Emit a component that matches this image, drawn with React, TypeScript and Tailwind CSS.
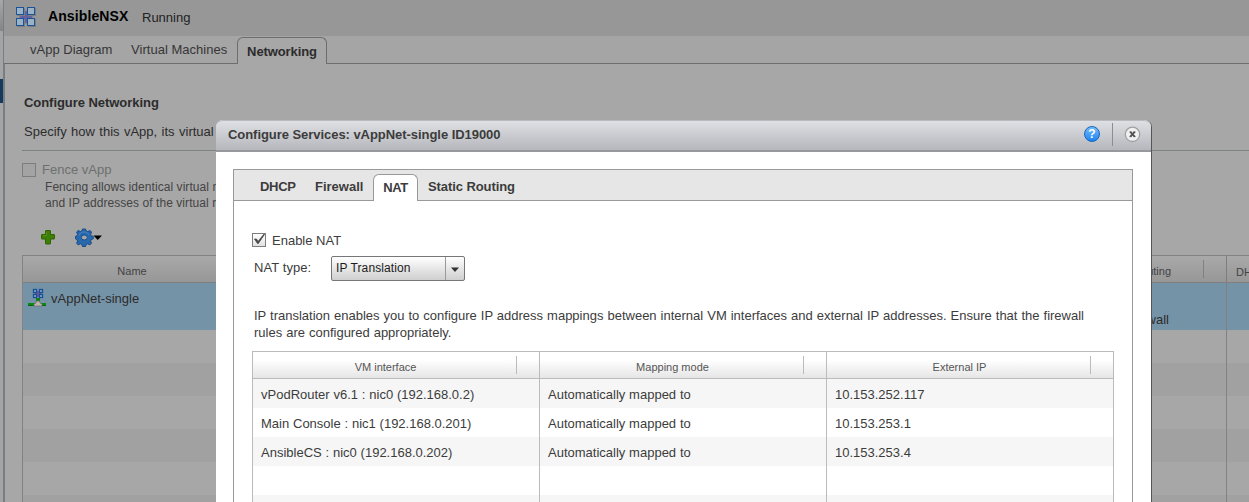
import React from "react";

function VAppIcon() {
  return (
    <svg width="20" height="20" viewBox="0 0 20 20" className="block">
      <path d="M10 3l1.500 2.500L15 4.500l-1 3.500 3 2-3 2 1 3.500-3.500-1L10 17l-1.500-2.500-3.500 1 1-3.500-3-2L6 8 5 4.500l3.500 1z" fill="#5c57a0" opacity=".85" />
      {[[1, 1], [12, 1], [1, 12], [12, 12]].map(([x, y]) => (
        <g key={x + "-" + y}>
          <rect x={x + 0.5} y={y + 0.5} width="7" height="7" fill="none" stroke="#7d7d7d" />
          <rect x={x - 0.5} y={y - 0.5} width="7" height="7" fill="#9bb2c4" stroke="#17549a" />
        </g>
      ))}
    </svg>
  );
}

function PlusIcon() {
  return (
    <svg width="16" height="16" viewBox="0 0 16 16" className="block">
      <path d="M6 1.500h4a.5.5 0 0 1 .5.5v3.500H14a.5.5 0 0 1 .5.5v3.500a.5.5 0 0 1-.5.5h-3.500V14.500a.5.5 0 0 1-.5.5H6a.5.5 0 0 1-.5-.5V10H2a.5.5 0 0 1-.5-.5V6a.5.5 0 0 1 .5-.5h3.500V2a.5.5 0 0 1 .5-.5z" fill="#3d7f08" stroke="#2f6400" />
      <path d="M6.500 3v3.500H3" fill="none" stroke="#559020" />
    </svg>
  );
}

function GearIcon() {
  return (
    <svg width="27" height="19" viewBox="0 0 27 19" className="block">
      <path d="M7.500 1h3l.7 2 1.500.6L15 2.500 16.500 4l-.9 2.400.6 1.300 2.100.7v2.400l-2.100.8-.6 1.400.9 2.300-1.700 1.500-2.200-1-1.400.6-.7 2.100h-3l-.8-2.100-1.300-.6-2.200 1L1.600 15.300l1-2.300-.6-1.400-1.500-.8V8.400L2 7.700l.6-1.300-1-2.400 1.600-1.500 2.200 1.100L6.800 3z" fill="#2868ac" stroke="#174a88" />
      <path d="M4 7.500C5 4.500 7 4 9 4s4 .8 5 3" fill="none" stroke="#4b84c0" />
      <ellipse cx="9.300" cy="9.500" rx="3" ry="2.500" fill="#a6a6a6" stroke="#174f90" />
      <path d="M18.500 7.500h8.500L22.700 12z" fill="#000" />
    </svg>
  );
}

function NetIcon() {
  return (
    <svg width="18" height="19" viewBox="0 0 18 19" className="block">
      <path d="M8 10h4v4H8z" fill="#128012" />
      <path d="M7 5h6v2H7zM9 3h2v6H9z" fill="#6f579d" />
      {[[5.5, 1.5], [11.5, 1.5], [5.5, 6.5], [11.5, 6.5]].map(([x, y]) => (
        <rect key={x + "-" + y} x={x} y={y} width="3" height="3" fill="#8eb4cf" stroke="#164f96" strokeWidth="1.300" />
      ))}
      <path d="M0 15h18v3H0z" fill="#0b8a12" />
      <path d="M0 17h18v1H0z" fill="#08660c" />
      <path d="M8.500 13h3l.5 2 2 1v2H6v-2l2-1z" fill="#b9b5b0" stroke="#6d6a68" strokeWidth=".7" />
    </svg>
  );
}

function HelpIcon() {
  return (
    <div className="flex h-4 w-4 items-center justify-center rounded-full border border-[#1767bd] bg-linear-to-b from-[#74bbf7] to-[#1683f2] text-[12px] leading-none font-bold text-white">
      ?
    </div>
  );
}

function CloseIcon() {
  return (
    <svg width="18" height="18" viewBox="0 0 18 18" className="block">
      <circle cx="8.500" cy="9.300" r="7.200" fill="#f0f0f0" stroke="#a0a0a0" strokeWidth="1.300" />
      <path d="M6.300 6.900l4.400 4.800M10.700 6.900l-4.400 4.800" stroke="#505050" strokeWidth="1.800" />
      <path d="M5.500 7h2M9.500 7h2M5.500 11.600h2M9.500 11.600h2" stroke="#505050" />
    </svg>
  );
}

const mappings = [
  ["vPodRouter v6.1 : nic0 (192.168.0.2)", "Automatically mapped to", "10.153.252.117"],
  ["Main Console : nic1 (192.168.0.201)", "Automatically mapped to", "10.153.253.1"],
  ["AnsibleCS : nic0 (192.168.0.202)", "Automatically mapped to", "10.153.253.4"],
  ["", "", ""],
  ["", "", ""],
];

function Background() {
  return (
    <div className="flex h-[502px] w-[1249px]">
      <div className="flex w-[3px] shrink-0 flex-col bg-[#a4a4a4]">
        <div className="h-[31px] bg-linear-to-b from-[#a7a7a7] to-[#858585]" />
        <div className="h-12" />
        <div className="h-6 bg-[#19395b]" />
      </div>
      <div className="w-px shrink-0 bg-[#71818b]" />
      <div className="flex min-w-0 grow flex-col">
        <header className="flex h-9 shrink-0 items-start bg-[#979797] pl-[12px]">
          <div className="mt-[7px] w-[32px]"><VAppIcon /></div>
          <h1 className="mt-[7px] w-[94px] text-[14px] leading-[18px] font-bold tracking-[0.1px] whitespace-nowrap text-black">AnsibleNSX</h1>
          <span className="mt-[9px] text-[13px] leading-[18px] text-[#222]">Running</span>
        </header>
        <nav className="flex h-7 shrink-0 border-b border-[#6d6d6d] bg-[#a5a5a5] pl-[26px] text-[13px] leading-[18px] whitespace-nowrap text-[#363636]">
          <span className="mt-[5px] w-[101px]">vApp Diagram</span>
          <span className="mt-[5px] w-[106px] tracking-[0.03px]">Virtual Machines</span>
          <span className="mt-px h-[27px] w-[90px] rounded-t-[6px] border border-b-0 border-[#6d6d6d] bg-[#a7a7a7] pt-[5px] text-center font-bold tracking-[-0.1px] text-[#2c2c2c]">Networking</span>
        </nav>
        <main className="flex grow flex-col border-l border-[#7c7c7c] bg-[#a7a7a7] pl-[17px]">
          <h2 className="mt-[30px] pl-[2px] text-[13px] leading-[18px] font-bold tracking-[-0.05px] text-[#2c2c2c]">Configure Networking</h2>
          <p className="mt-[11px] pl-[2px] text-[13px] leading-[18px] [word-spacing:0.8px] text-[#2c2c2c]">Specify how this vApp, its virtual</p>
          <div className="mt-[9px] h-px shrink-0 bg-[#7b8282]" />
          <div className="mt-[10px] flex h-[18px] items-center gap-[6px] text-[13px] text-[#6c706e]">
            <span className="h-[14px] w-[14px] border border-[#7d7d7d] bg-[#a3a3a3]" />
            <span>Fence vApp</span>
          </div>
          <p className="w-[171px] overflow-hidden pl-[23px] text-[12px] leading-4 tracking-[0.06px] whitespace-nowrap text-[#444] w-[194px]">Fencing allows identical virtual m<br />and IP addresses of the virtual r</p>
          <div className="mt-[17px] flex h-[27px] items-start pl-[18px]">
            <div className="mt-px w-[35px]"><PlusIcon /></div>
            <GearIcon />
          </div>
          <section className="flex grow flex-col border-t border-l border-[#828282]">
            <div className="flex h-[27px] shrink-0 border-b border-[#808080] bg-linear-to-b from-[#a9a9a9] to-[#979797] text-[11px] text-[#424242]">
              <div className="flex w-[218px] shrink-0 items-center justify-center pt-[5px]">Name</div>
              <div className="flex w-[986px] shrink-0 items-center justify-end border-r border-[#7d7d7d] pt-[5px]">
                <span className="mr-[32px]">Routing</span>
                <span className="mr-[22px] -mt-[5px] h-[18px] w-px bg-[#808080]" />
              </div>
              <div className="w-0 grow overflow-hidden pt-[8px] pl-[9px] leading-4">DHCP</div>
            </div>
            <div className="flex h-[47px] shrink-0 bg-[#7593a7] text-[13px] leading-[18px] text-[#2c2c2c]">
              <div className="mt-[5px] w-[24px] shrink-0 pl-[5px]"><NetIcon /></div>
              <span className="mt-[7px] w-[900px] shrink-0 pl-[4px]">vAppNet-single</span>
              <div className="w-[280px] shrink-0 border-r border-[#808080] pt-[28px] pr-[57px] text-right">Firewall</div>
            </div>
            {[0, 1, 2, 3, 4, 5].map((i) => (
              <div key={i} className="h-[33px] shrink-0 odd:bg-[#a7a7a7] even:bg-[#a1a1a1]">
                <div className="h-full w-[1204px] border-r border-[#828282]" />
              </div>
            ))}
          </section>
        </main>
      </div>
    </div>
  );
}

function Dialog() {
  return (
    <div className="absolute top-[120px] left-[216px] flex h-[382px] w-[936px] flex-col rounded-t-[7px] border-r border-[#555] bg-white">
      <header className="flex h-8 shrink-0 items-start rounded-t-[7px] border-t border-b-2 border-t-[#b8babd] border-b-[#96989d] bg-linear-to-b from-[#dfe0e4] to-[#b5b7bc] pl-3">
        <h2 className="mt-[5px] grow text-[13px] leading-[18px] font-bold tracking-[-0.05px] text-[#3c3c3c]">Configure Services: vAppNet-single ID19000</h2>
        <div className="mt-[5px] w-7"><HelpIcon /></div>
        <div className="mt-[2px] h-[23px] w-px bg-[#8c8d91]" />
        <div className="mt-1 ml-[11px] w-[27px]"><CloseIcon /></div>
      </header>
      <div className="mt-[17px] ml-[17px] flex w-[900px] grow flex-col border border-b-0 border-[#999]">
        <nav className="flex h-[31px] shrink-0 border-b border-[#999] bg-[#e6e6e6] pl-[26px] text-[13px] leading-[18px] font-bold tracking-[-0.08px] whitespace-nowrap text-[#3c3c3c]">
          <span className="mt-2 w-[55px] tracking-[-0.3px]">DHCP</span>
          <span className="mt-2 w-[58px] tracking-normal">Firewall</span>
          <span className="mt-1 h-[27px] w-[45px] rounded-t-[6px] border border-b-0 border-[#999] bg-white pt-[4px] text-center tracking-[-0.4px]">NAT</span>
          <span className="mt-2 ml-[10px]">Static Routing</span>
        </nav>
        <div className="flex grow flex-col pl-[18px] text-[13px] text-[#3c3c3c]">
          <label className="mt-[30px] flex h-[18px] items-center gap-[6px]">
            <span className="flex h-[14px] w-[14px] items-center justify-center border border-[#7e7e7e] bg-linear-to-b from-white to-[#e2e2e2]">
              <svg width="12" height="12" viewBox="0 0 12 12"><path d="M1.500 5h2L5 7.500 11 0l.5.5L5.300 9.500H4.500z" fill="#444" stroke="#444" strokeWidth=".7" /></svg>
            </span>
            <span className="pt-[2px]">Enable NAT</span>
          </label>
          <div className="mt-[6px] flex h-[26px] items-center pl-[2px]">
            <span className="w-[77px] tracking-[0.08px]">NAT type:</span>
            <div className="flex h-[25px] w-[134px] rounded-[2px] border border-[#777] bg-linear-to-b from-white to-[#cfcfcf] text-[12px] text-[#1c1c1c]">
              <span className="w-[114px] border-r border-[#999] pl-1 leading-[22px] tracking-[0.1px]">IP Translation</span>
              <svg width="18" height="23" viewBox="0 0 18 23"><path d="M5 10.500h8L9 15z" fill="#333" /></svg>
            </div>
          </div>
          <p className="mt-[26px] ml-[2px] w-[850px] text-[13px] leading-[17px] whitespace-nowrap [word-spacing:0.38px]">IP translation enables you to configure IP address mappings between internal VM interfaces and external IP addresses. Ensure that the firewall<br />rules are configured appropriately.</p>
          <table className="mt-[10px] w-[862px] table-fixed border-separate border-spacing-0 border-t border-l border-[#bbb]">
            <thead>
              <tr>
                {["VM interface", "Mapping mode", "External IP"].map((title) => (
                  <th key={title} className="h-[27px] border-r border-b border-[#bbb] bg-linear-to-b from-white from-30% to-[#e6e6e6] p-0 text-[11px] font-normal text-[#555]">
                    <div className="flex items-center">
                      <span className="grow pt-1 pl-[2px] text-center">{title}</span>
                      <span className="mr-[22px] h-[18px] w-px bg-[#bbb]" />
                    </div>
                  </th>
                ))}
              </tr>
            </thead>
            <tbody>
              {mappings.map((row, i) => (
                <tr key={i} className="h-[29px] odd:bg-[#f6f6f6]">
                  {row.map((cell, j) => (
                    <td key={j} className="border-r border-[#bbb] p-0 pt-[2px] pl-2 [word-spacing:0.2px]">{cell}</td>
                  ))}
                </tr>
              ))}
            </tbody>
          </table>
        </div>
      </div>
    </div>
  );
}

export default function App() {
  return (
    <div className="relative h-[502px] w-[1249px] overflow-hidden bg-[#a7a7a7] font-['Liberation_Sans',sans-serif]">
      <Background />
      <Dialog />
    </div>
  );
}
